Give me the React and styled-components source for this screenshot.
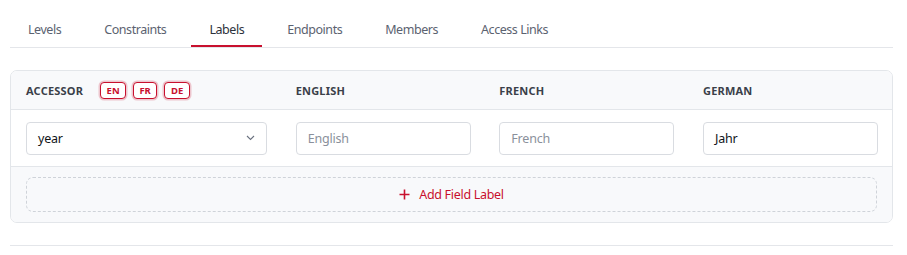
import React from "react";
import styled, { createGlobalStyle } from "styled-components";

const Global = createGlobalStyle`
  html, body { margin: 0; padding: 0; background: #ffffff; }
  body { font-family: "Noto Sans", "Open Sans", sans-serif; color: #1f2329; }
  * { box-sizing: border-box; }
`;

const Page = styled.div`
  padding: 18px 14px 0 10px;
  width: 907px;
`;

const TabBar = styled.div`
  display: flex;
  gap: 7px;
  border-bottom: 1px solid #e4e6ea;
  height: 30px;
`;

const Tab = styled.div`
  height: 29px;
  padding: 3px 18px 0;
  display: flex;
  align-items: flex-start;
  font-size: 12.5px;
  letter-spacing: -0.45px;
  color: ${(p) => (p.$active ? "#2d323b" : "#5b6270")};
  border-bottom: 2px solid ${(p) => (p.$active ? "#c8102e" : "transparent")};
  margin-bottom: -1px;
`;

const Card = styled.div`
  margin-top: 22px;
  border: 1px solid #e3e6ea;
  border-radius: 7px;
  overflow: hidden;
`;

const Grid = styled.div`
  display: grid;
  grid-template-columns: 241px repeat(3, 175px);
  justify-content: space-between;
  padding: 0 14px 0 15px;
`;

const HeaderRow = styled(Grid)`
  background: #f8f9fb;
  height: 39px;
  align-items: center;
  border-bottom: 1px solid #e3e6ea;
`;

const HeadCell = styled.div`
  display: flex;
  align-items: center;
  font-size: 11px;
  font-weight: 700;
  letter-spacing: 0.2px;
  color: #3a3f49;
  text-transform: uppercase;
`;

const Badges = styled.div`
  display: flex;
  gap: 7px;
  margin-left: 17px;
`;

const Badge = styled.span`
  display: inline-flex;
  align-items: center;
  justify-content: center;
  height: 17px;
  min-width: ${(p) => p.$w}px;
  padding: 0 4px;
  border: 1.5px solid #c8102e;
  border-radius: 4px;
  font-size: 9.5px;
  font-weight: 700;
  letter-spacing: 0;
  color: #c8102e;
  box-shadow: 0 0 0 1.5px rgba(200, 16, 46, 0.22);
  background: #fff;
`;

const BodyRow = styled(Grid)`
  height: 57px;
  align-items: center;
  background: #fff;
  border-bottom: 1px solid #e3e6ea;
`;

const Field = styled.div`
  height: 33px;
  border: 1px solid #d9dce1;
  border-radius: 4px;
  display: flex;
  align-items: center;
  justify-content: space-between;
  padding: 0 11px;
  font-size: 12.5px;
  letter-spacing: -0.2px;
  color: ${(p) => (p.$placeholder ? "#8a909b" : "#111418")};
  background: #fff;
`;

const Footer = styled.div`
  background: #f8f9fb;
  padding: 10px 15px 10px;
`;

const AddButton = styled.div`
  height: 35px;
  border: 1px dashed #cfd3d9;
  border-radius: 7px;
  display: flex;
  align-items: center;
  justify-content: center;
  gap: 9px;
  font-size: 12.5px;
  letter-spacing: -0.3px;
  color: #c8102e;
`;

const BottomRule = styled.div`
  margin-top: 22px;
  border-top: 1px solid #e4e6ea;
`;

const Chevron = () => (
  <svg width="9" height="6" viewBox="0 0 9 6" fill="none">
    <path d="M1 1l3.5 3.5L8 1" stroke="#6b7280" strokeWidth="1.1" />
  </svg>
);

const Plus = () => (
  <svg width="11" height="11" viewBox="0 0 11 11">
    <path d="M5.5 0.5v10M0.5 5.5h10" stroke="#c8102e" strokeWidth="1.6" />
  </svg>
);

const tabs = ["Levels", "Constraints", "Labels", "Endpoints", "Members", "Access Links"];

export default function App() {
  return (
    <>
      <Global />
      <Page>
        <TabBar>
          {tabs.map((t) => (
            <Tab key={t} $active={t === "Labels"}>
              {t}
            </Tab>
          ))}
        </TabBar>
        <Card>
          <HeaderRow>
            <HeadCell>
              Accessor
              <Badges>
                <Badge $w={26}>EN</Badge>
                <Badge $w={24}>FR</Badge>
                <Badge $w={26}>DE</Badge>
              </Badges>
            </HeadCell>
            <HeadCell>English</HeadCell>
            <HeadCell>French</HeadCell>
            <HeadCell>German</HeadCell>
          </HeaderRow>
          <BodyRow>
            <Field>
              year
              <Chevron />
            </Field>
            <Field $placeholder>English</Field>
            <Field $placeholder>French</Field>
            <Field>Jahr</Field>
          </BodyRow>
          <Footer>
            <AddButton>
              <Plus />
              Add Field Label
            </AddButton>
          </Footer>
        </Card>
        <BottomRule />
      </Page>
    </>
  );
}
